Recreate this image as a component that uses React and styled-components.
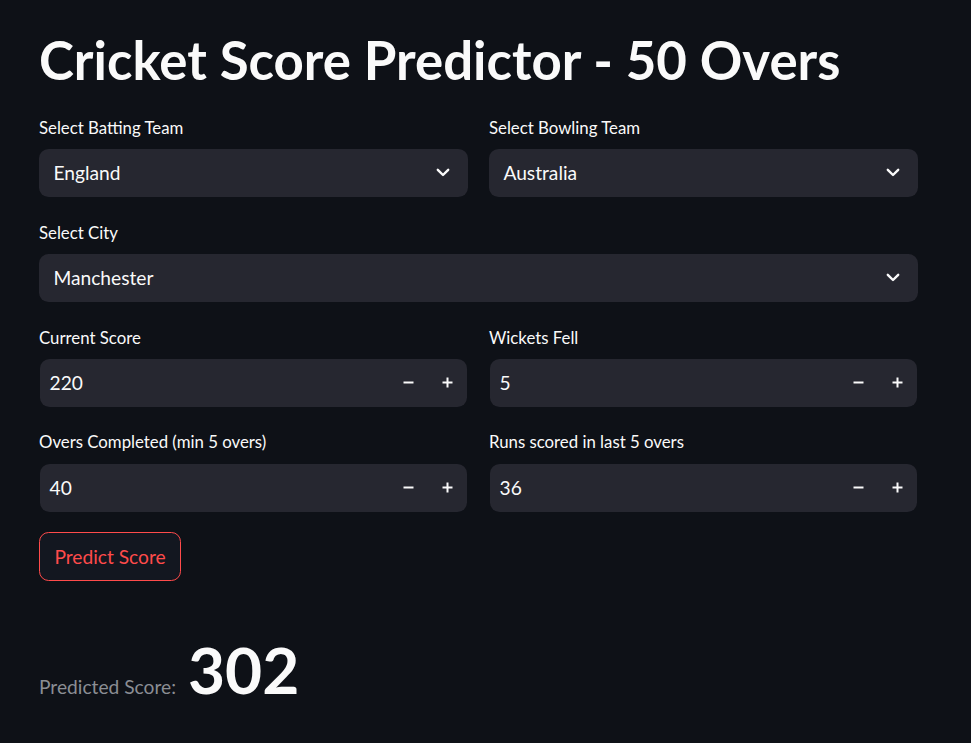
import styled, { createGlobalStyle } from "styled-components";

const Global = createGlobalStyle`
  body {
    margin: 0;
    background: #0e1117;
    color: #fafafa;
    font-family: "Lato", "Liberation Sans", sans-serif;
  }
`;

const Page = styled.main`
  width: 879px;
  padding: 28px 0 0 39px;
`;

const Title = styled.h1`
  margin: 0 0 19.2px;
  font-size: 52.8px;
  font-weight: 700;
  line-height: 1.2;
  color: #fafafa;
`;

const Form = styled.div`
  display: grid;
  grid-template-columns: 1fr 1fr;
  column-gap: 21px;
  row-gap: 18.6px;
`;

const Field = styled.div`
  display: flex;
  flex-direction: column;
  grid-column: ${p => (p.$wide ? "1 / -1" : "auto")};
`;

const Label = styled.label`
  height: 38.4px;
  box-sizing: border-box;
  padding-top: 4px;
  font-size: 16.8px;
  line-height: 1.6;
  color: #fafafa;
`;

const SelectBox = styled.div`
  height: 48px;
  display: flex;
  align-items: center;
  justify-content: space-between;
  padding: 0 18.5px 0 14.4px;
  background: #262730;
  border-radius: 9.6px;
  font-size: 19.2px;
`;

const NumberBox = styled.div`
  height: 48px;
  margin: 0 1px;
  display: flex;
  align-items: center;
  background: #262730;
  border-radius: 9.6px;
  font-size: 19.2px;
`;

const Value = styled.span`
  flex: 1;
  padding-left: 9.6px;
`;

const Step = styled.button`
  width: 39px;
  height: 48px;
  display: flex;
  align-items: center;
  justify-content: center;
  padding: 0;
  border: none;
  background: transparent;
  color: #fafafa;
`;

const PredictButton = styled.button`
  margin-top: 20px;
  height: 49.6px;
  padding: 0 14.4px;
  font-family: inherit;
  font-size: 19.2px;
  color: #ff4b4b;
  background: #131720;
  border: 1px solid #ff4b4b;
  border-radius: 9.6px;
`;

const Result = styled.div`
  margin-top: 50.4px;
  display: flex;
  align-items: baseline;
  gap: 12px;
`;

const ResultLabel = styled.span`
  font-size: 19.2px;
  color: #8b8e94;
`;

const ResultValue = styled.span`
  font-size: 64px;
  font-weight: 700;
  line-height: 1.2;
  color: #fafafa;
`;

function Chevron() {
  return (
    <svg width="14" height="9" viewBox="0 0 14 9">
      <polyline points="1.8,1.8 7,7 12.2,1.8" fill="none" stroke="#fafafa" strokeWidth="2.4" strokeLinecap="round" strokeLinejoin="round" />
    </svg>
  );
}

function Minus() {
  return (
    <svg width="11" height="11" viewBox="0 0 11 11">
      <line x1="0.5" y1="5.5" x2="10.5" y2="5.5" stroke="#fafafa" strokeWidth="2" />
    </svg>
  );
}

function Plus() {
  return (
    <svg width="11" height="11" viewBox="0 0 11 11">
      <line x1="0.5" y1="5.5" x2="10.5" y2="5.5" stroke="#fafafa" strokeWidth="2" />
      <line x1="5.5" y1="0.5" x2="5.5" y2="10.5" stroke="#fafafa" strokeWidth="2" />
    </svg>
  );
}

function SelectField({ label, value, wide }) {
  return (
    <Field $wide={wide}>
      <Label>{label}</Label>
      <SelectBox>
        <span>{value}</span>
        <Chevron />
      </SelectBox>
    </Field>
  );
}

function NumberField({ label, value }) {
  return (
    <Field>
      <Label>{label}</Label>
      <NumberBox>
        <Value>{value}</Value>
        <Step aria-label="decrement"><Minus /></Step>
        <Step aria-label="increment"><Plus /></Step>
      </NumberBox>
    </Field>
  );
}

export default function App() {
  return (
    <>
      <Global />
      <Page>
        <Title>Cricket Score Predictor - 50 Overs</Title>
        <Form>
          <SelectField label="Select Batting Team" value="England" />
          <SelectField label="Select Bowling Team" value="Australia" />
          <SelectField label="Select City" value="Manchester" wide />
          <NumberField label="Current Score" value="220" />
          <NumberField label="Wickets Fell" value="5" />
          <NumberField label="Overs Completed (min 5 overs)" value="40" />
          <NumberField label="Runs scored in last 5 overs" value="36" />
        </Form>
        <PredictButton>Predict Score</PredictButton>
        <Result>
          <ResultLabel>Predicted Score:</ResultLabel>
          <ResultValue>302</ResultValue>
        </Result>
      </Page>
    </>
  );
}
